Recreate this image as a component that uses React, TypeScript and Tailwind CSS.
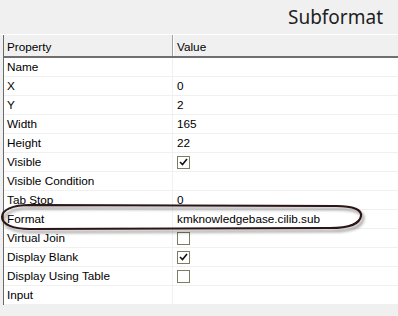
import React from "react"

type Row = { name: string; value?: string; check?: boolean }

const rows: Row[] = [
  { name: "Name" },
  { name: "X", value: "0" },
  { name: "Y", value: "2" },
  { name: "Width", value: "165" },
  { name: "Height", value: "22" },
  { name: "Visible", check: true },
  { name: "Visible Condition" },
  { name: "Tab Stop", value: "0" },
  { name: "Format", value: "kmknowledgebase.cilib.sub" },
  { name: "Virtual Join", check: false },
  { name: "Display Blank", check: true },
  { name: "Display Using Table", check: false },
  { name: "Input" },
]

function CheckBox({ checked }: { checked: boolean }) {
  return (
    <span className="flex h-[13px] w-[13px] items-center justify-center border border-[#7c7c62] bg-white">
      {checked && (
        <svg width="9" height="8" viewBox="0 0 9 8">
          <path d="M1 4 L3.5 6.5 L8 1" fill="none" stroke="#111" strokeWidth="1.6" />
        </svg>
      )}
    </span>
  )
}

export default function App() {
  return (
    <div className="relative h-[316px] w-[398px] overflow-hidden bg-[#f0f0f0] font-['Liberation_Sans',Arial,sans-serif] text-[11.75px] text-black">
      <div className="flex h-[34px] items-start justify-end pr-[15px] pt-[4px] font-['Noto_Sans',sans-serif] text-[19px] leading-[26px] text-[#1e1e1e]">
        Subformat
      </div>
      <div className="h-px bg-white" />
      <div className="ml-[3px] border-l border-[#6a6a6a]">
        <div className="flex h-[23px] border-b-2 border-[#6f6f6f] bg-[#f0f0f0]">
          <div className="flex w-[169px] items-center border-r border-[#a0a0a0] pl-[3px] pt-[3px]">Property</div>
          <div className="flex flex-1 items-center border-l border-white pl-[3px] pt-[3px]">Value</div>
        </div>
        {rows.map((r) => (
          <div key={r.name} className="flex h-[19px] border-b border-[#f0f0f0] bg-white leading-[18px]">
            <div className="w-[169px] border-r border-[#f0f0f0] pl-[3px]">{r.name}</div>
            <div className="flex flex-1 items-center pl-[4px]">
              {r.check !== undefined ? <CheckBox checked={r.check} /> : r.value}
            </div>
          </div>
        ))}
      </div>
      <svg className="absolute left-0 top-[199px]" width="372" height="40" viewBox="0 199 372 40">
        <defs>
          <filter id="sh" x="-5%" y="-40%" width="110%" height="190%">
            <feDropShadow dx="2" dy="3" stdDeviation="1.6" floodColor="#000" floodOpacity="0.45" />
          </filter>
        </defs>
        <path
          d="M30 205 L336 206 C354 206 362 210 361 216 C360 223 350 228 330 228 L30 229 C12 229 2 224 2 217 C2 210 12 205 30 205 Z"
          fill="none"
          stroke="#2a1214"
          strokeWidth="2"
          filter="url(#sh)"
        />
      </svg>
    </div>
  )
}
